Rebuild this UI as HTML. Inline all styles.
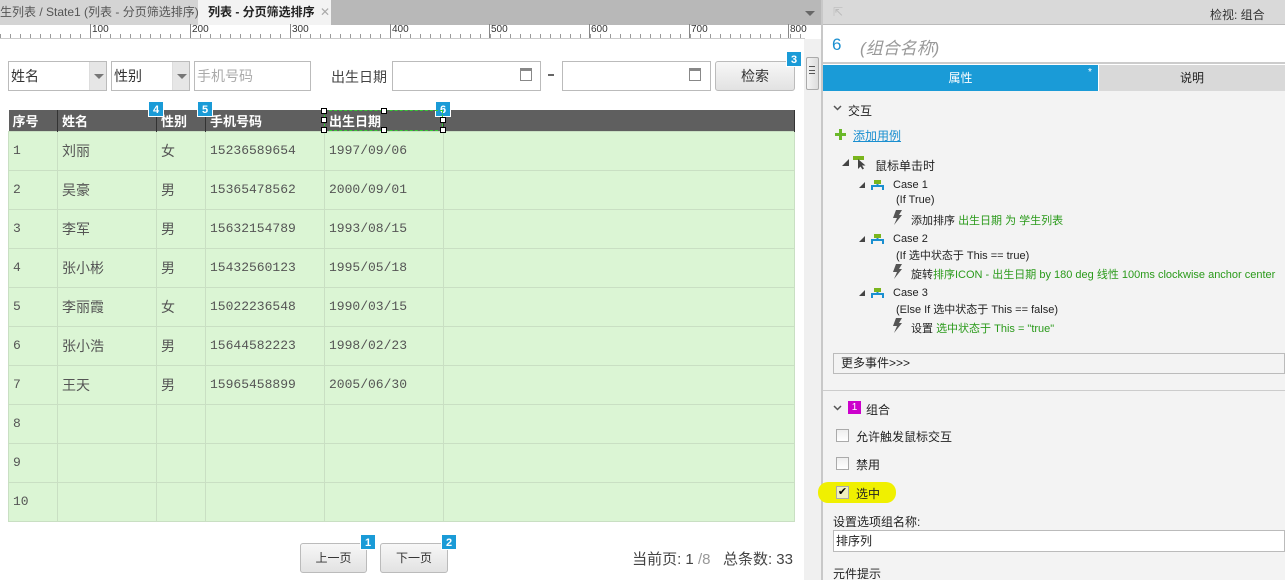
<!DOCTYPE html><html><head><meta charset="utf-8"><style>
*{margin:0;padding:0;box-sizing:border-box}
body{width:1285px;height:580px;overflow:hidden;position:relative;background:#fff;font-family:"Liberation Sans","Noto Sans CJK SC",sans-serif;font-size:12px;color:#333}
.a{position:absolute}
.badge{position:absolute;width:16px;height:16px;background:#1a9bd7;color:#fff;font-size:11px;font-weight:bold;text-align:center;line-height:16px;border:1px solid #fff}
.sel{position:absolute;border:1px solid #bbb;background:#fff;height:30px;font-size:14px;line-height:28px;padding-left:2px;color:#333}
.sel .dd{position:absolute;right:0;top:0;width:17px;height:28px;background:#e6e6e6;border-left:1px solid #ddd}
.sel .dd:after{content:"";position:absolute;left:4px;top:12px;border-left:5px solid transparent;border-right:5px solid transparent;border-top:5px solid #777}
table{border-collapse:collapse;position:absolute;left:8px;top:110px;width:787px}
td{border:1px solid #c9dfc3;height:39px;padding-left:4px;color:#555;font-size:13px;background:#dbf5d4;font-family:"Liberation Mono","Noto Sans CJK SC",monospace}
td.c{font-family:"Liberation Sans","Noto Sans CJK SC",sans-serif;font-size:14px}
th{background:#5f5f5f;color:#fff;height:21px;text-align:left;padding-left:4px;font-size:13px;border-right:1px solid #333;font-weight:bold}
.btn{position:absolute;border:1px solid #bbb;border-radius:3px;background:linear-gradient(#f7f7f7,#e2e2e2);text-align:center;color:#333}
.cb{position:absolute;width:13px;height:13px;border:1px solid #aaa;background:linear-gradient(#eee,#fff)}
.g{color:#2a9a1a}
.r{position:absolute;top:24px;font-size:10px;color:#333;border-left:1px solid #888;padding-left:1px;height:14px}
</style></head><body>
<div class="a" style="left:0;top:0;width:822px;height:25px;background:#b8b8b8"></div>
<div class="a" style="left:0;top:0;width:198px;height:25px;background:#d4d4d4;font-size:12px;line-height:25px;color:#555;white-space:nowrap;overflow:hidden">生列表 / State1 (列表 - 分页筛选排序) <span style="color:#aaa;margin-left:2px">✕</span></div>
<div class="a" style="left:198px;top:0;width:133px;height:25px;background:#f3f3f3;font-weight:bold;line-height:25px;padding-left:10px;color:#222;white-space:nowrap">列表 - 分页筛选排序 <span style="color:#aaa;font-weight:normal;margin-left:2px">✕</span></div>
<div class="a" style="left:805px;top:11px;border-left:5px solid transparent;border-right:5px solid transparent;border-top:5px solid #666"></div>
<div class="a" style="left:0;top:25px;width:805px;height:14px;background:#fff;border-bottom:1px solid #ccc;background-image:repeating-linear-gradient(90deg,#999 0 1px,transparent 1px 10px);background-size:100% 4px;background-repeat:repeat-x;background-position:0 9px"></div>
<div class="r" style="left:90px">100</div><div class="r" style="left:190px">200</div><div class="r" style="left:290px">300</div><div class="r" style="left:390px">400</div><div class="r" style="left:489px">500</div><div class="r" style="left:589px">600</div><div class="r" style="left:689px">700</div><div class="r" style="left:788px">800</div>
<div class="a" style="left:804px;top:39px;width:17px;height:541px;background:#f0f0f0"></div>
<div class="a" style="left:806px;top:57px;width:13px;height:33px;border:1px solid #aaa;border-radius:2px;background:linear-gradient(90deg,#f4f4f4,#ddd)"></div>
<div class="a" style="left:809px;top:66px;width:6px;height:8px;border-top:1px solid #555;border-bottom:1px solid #555"></div>
<div class="a" style="left:809px;top:70px;width:6px;height:1px;background:#555"></div>
<div class="a" style="left:821px;top:0;width:2px;height:580px;background:#c8c8c8"></div>
<div class="sel" style="left:8px;top:61px;width:99px">姓名<div class="dd"></div></div>
<div class="sel" style="left:111px;top:61px;width:79px">性别<div class="dd"></div></div>
<div class="sel" style="left:194px;top:61px;width:117px;color:#aaa">手机号码</div>
<div class="a" style="left:331px;top:67px;font-size:14px;color:#444">出生日期</div>
<div class="sel" style="left:392px;top:61px;width:149px"></div>
<div class="a" style="left:520px;top:68px;width:12px;height:13px;border:1px solid #888;border-top-width:3px"></div>
<div class="a" style="left:548px;top:74px;width:6px;height:2px;background:#666"></div>
<div class="sel" style="left:562px;top:61px;width:149px"></div>
<div class="a" style="left:689px;top:68px;width:12px;height:13px;border:1px solid #888;border-top-width:3px"></div>
<div class="btn" style="left:715px;top:61px;width:80px;height:30px;line-height:28px;font-size:14px">检索</div>
<div class="badge" style="left:786px;top:51px">3</div>
<table>
<tr><th style="width:49px">序号</th><th style="width:99px">姓名</th><th style="width:49px">性别</th><th style="width:119px">手机号码</th><th style="width:119px">出生日期</th><th></th></tr>
<tr><td>1</td><td class="c">刘丽</td><td class="c">女</td><td>15236589654</td><td>1997/09/06</td><td></td></tr>
<tr><td>2</td><td class="c">吴豪</td><td class="c">男</td><td>15365478562</td><td>2000/09/01</td><td></td></tr>
<tr><td>3</td><td class="c">李军</td><td class="c">男</td><td>15632154789</td><td>1993/08/15</td><td></td></tr>
<tr><td>4</td><td class="c">张小彬</td><td class="c">男</td><td>15432560123</td><td>1995/05/18</td><td></td></tr>
<tr><td>5</td><td class="c">李丽霞</td><td class="c">女</td><td>15022236548</td><td>1990/03/15</td><td></td></tr>
<tr><td>6</td><td class="c">张小浩</td><td class="c">男</td><td>15644582223</td><td>1998/02/23</td><td></td></tr>
<tr><td>7</td><td class="c">王天</td><td class="c">男</td><td>15965458899</td><td>2005/06/30</td><td></td></tr>
<tr><td>8</td><td></td><td></td><td></td><td></td><td></td></tr>
<tr><td>9</td><td></td><td></td><td></td><td></td><td></td></tr>
<tr><td>10</td><td></td><td></td><td></td><td></td><td></td></tr>
</table>
<div class="badge" style="left:148px;top:101px">4</div>
<div class="badge" style="left:197px;top:101px">5</div>
<div class="badge" style="left:435px;top:101px">6</div>
<div class="a" style="left:324px;top:110px;width:119px;height:21px;border:1px dashed #3c3"></div>
<div class="a" style="left:321px;top:108px;width:6px;height:6px;border:1px solid #000;background:#fff"></div>
<div class="a" style="left:381px;top:108px;width:6px;height:6px;border:1px solid #000;background:#fff"></div>
<div class="a" style="left:321px;top:117px;width:6px;height:6px;border:1px solid #000;background:#fff"></div>
<div class="a" style="left:321px;top:127px;width:6px;height:6px;border:1px solid #000;background:#fff"></div>
<div class="a" style="left:381px;top:127px;width:6px;height:6px;border:1px solid #000;background:#fff"></div>
<div class="a" style="left:440px;top:117px;width:6px;height:6px;border:1px solid #000;background:#fff"></div>
<div class="a" style="left:440px;top:127px;width:6px;height:6px;border:1px solid #000;background:#fff"></div>
<div class="btn" style="left:300px;top:543px;width:67px;height:30px;line-height:28px">上一页</div>
<div class="badge" style="left:360px;top:534px">1</div>
<div class="btn" style="left:380px;top:543px;width:68px;height:30px;line-height:28px">下一页</div>
<div class="badge" style="left:441px;top:534px">2</div>
<div class="a" style="left:600px;width:193px;text-align:right;top:548px;font-size:15px;color:#444;white-space:nowrap">当前页: 1 <span style="color:#999">/8</span>&nbsp;&nbsp; 总条数: 33</div>
<div class="a" style="left:823px;top:0;width:462px;height:25px;background:#d9d9d9;border-bottom:1px solid #bbb"></div>
<div class="a" style="left:833px;top:5px;color:#bbb;font-size:12px">⇱</div>
<div class="a" style="left:1210px;top:6px;color:#333">检视: 组合</div>
<div class="a" style="left:823px;top:26px;width:462px;height:38px;background:#fff;border-bottom:2px solid #ccc"></div>
<div class="a" style="left:832px;top:35px;font-size:17px;color:#1a8fd0">6</div>
<div class="a" style="left:860px;top:34px;font-size:17px;color:#999;font-style:italic">(组合名称)</div>
<div class="a" style="left:823px;top:65px;width:275px;height:26px;background:#1a9bd7;color:#fff;text-align:center;line-height:26px">属性</div>
<div class="a" style="left:1088px;top:67px;color:#fff;font-size:10px">*</div>
<div class="a" style="left:1099px;top:65px;width:186px;height:26px;background:#d9d9d9;text-align:center;line-height:26px;color:#222">说明</div>
<div class="a" style="left:823px;top:91px;width:462px;height:489px;background:#f3f3f3"></div>
<svg class="a" style="left:833px;top:105px" width="9" height="6"><path d="M1 1L4.5 4.5L8 1" stroke="#555" stroke-width="1.5" fill="none"/></svg>
<div class="a" style="left:848px;top:102px;color:#222">交互</div>
<svg class="a" style="left:835px;top:129px" width="11" height="11"><path d="M4 0h3v4h4v3h-4v4h-3v-4h-4v-3h4z" fill="#6ab82a"/></svg>
<div class="a" style="left:853px;top:127px;color:#1a8fd0;text-decoration:underline">添加用例</div>
<div class="a" style="left:842px;top:159px;border-left:7px solid transparent;border-bottom:7px solid #444"></div>
<svg class="a" style="left:853px;top:156px" width="14" height="14"><rect x="0" y="0" width="11" height="4" fill="#7ab51d"/><path d="M5 3v10l2.5-2.5 2 3 1.5-1-2-3h3.5z" fill="#444"/></svg>
<div class="a" style="left:875px;top:157px;color:#222">鼠标单击时</div>
<div class="a" style="left:859px;top:182px;border-left:6px solid transparent;border-bottom:6px solid #444"></div>
<svg class="a" style="left:871px;top:180px" width="13" height="11"><rect x="3" y="0" width="7" height="4" fill="#7ab51d"/><path d="M1 10V6h11v4M6.5 4v2" stroke="#1a8fd0" stroke-width="2" fill="none"/></svg>
<div class="a" style="left:893px;top:179px;color:#222;font-size:11px">Case 1</div>
<div class="a" style="left:896px;top:194px;color:#222;font-size:11px">(If True)</div>
<svg class="a" style="left:892px;top:210px" width="10" height="15"><path d="M4 0h6l-3 5h3l-8 10 3-7h-4z" fill="#555"/></svg>
<div class="a" style="left:911px;top:212px;font-size:11px;color:#222">添加排序 <span class="g">出生日期 为 学生列表</span></div>
<div class="a" style="left:859px;top:236px;border-left:6px solid transparent;border-bottom:6px solid #444"></div>
<svg class="a" style="left:871px;top:234px" width="13" height="11"><rect x="3" y="0" width="7" height="4" fill="#7ab51d"/><path d="M1 10V6h11v4M6.5 4v2" stroke="#1a8fd0" stroke-width="2" fill="none"/></svg>
<div class="a" style="left:893px;top:233px;color:#222;font-size:11px">Case 2</div>
<div class="a" style="left:896px;top:247px;color:#222;font-size:11px">(If 选中状态于 This == true)</div>
<svg class="a" style="left:892px;top:264px" width="10" height="15"><path d="M4 0h6l-3 5h3l-8 10 3-7h-4z" fill="#555"/></svg>
<div class="a" style="left:911px;top:266px;font-size:11px;color:#222;white-space:nowrap">旋转<span class="g">排序ICON - 出生日期 by 180 deg 线性 100ms clockwise anchor center</span></div>
<div class="a" style="left:859px;top:290px;border-left:6px solid transparent;border-bottom:6px solid #444"></div>
<svg class="a" style="left:871px;top:288px" width="13" height="11"><rect x="3" y="0" width="7" height="4" fill="#7ab51d"/><path d="M1 10V6h11v4M6.5 4v2" stroke="#1a8fd0" stroke-width="2" fill="none"/></svg>
<div class="a" style="left:893px;top:287px;color:#222;font-size:11px">Case 3</div>
<div class="a" style="left:896px;top:301px;color:#222;font-size:11px">(Else If 选中状态于 This == false)</div>
<svg class="a" style="left:892px;top:318px" width="10" height="15"><path d="M4 0h6l-3 5h3l-8 10 3-7h-4z" fill="#555"/></svg>
<div class="a" style="left:911px;top:320px;font-size:11px;color:#222">设置 <span class="g">选中状态于 This = "true"</span></div>
<div class="a" style="left:833px;top:353px;width:452px;height:21px;border:1px solid #bbb;background:#f3f3f3;padding-left:7px;line-height:19px;color:#222">更多事件&gt;&gt;&gt;</div>
<div class="a" style="left:823px;top:390px;width:462px;height:1px;background:#ccc"></div>
<svg class="a" style="left:833px;top:405px" width="9" height="6"><path d="M1 1L4.5 4.5L8 1" stroke="#555" stroke-width="1.5" fill="none"/></svg>
<div class="a" style="left:848px;top:401px;width:13px;height:13px;background:#c0c;color:#fff;font-size:10px;text-align:center;line-height:13px">1</div>
<div class="a" style="left:866px;top:401px;color:#222">组合</div>
<div class="cb" style="left:836px;top:429px"></div>
<div class="a" style="left:856px;top:428px;color:#222">允许触发鼠标交互</div>
<div class="cb" style="left:836px;top:457px"></div>
<div class="a" style="left:856px;top:456px;color:#222">禁用</div>
<div class="a" style="left:818px;top:482px;width:78px;height:21px;border-radius:10px;background:#f0f000"></div>
<div class="cb" style="left:836px;top:486px;background:#f0f0c0;font-size:11px;line-height:11px;text-align:center;color:#000">✔</div>
<div class="a" style="left:856px;top:485px;color:#222">选中</div>
<div class="a" style="left:833px;top:513px;color:#222">设置选项组名称:</div>
<div class="a" style="left:833px;top:530px;width:452px;height:22px;border:1px solid #bbb;background:#fff;padding-left:2px;line-height:20px;color:#222">排序列</div>
<div class="a" style="left:833px;top:565px;color:#222">元件提示</div>
</body></html>
